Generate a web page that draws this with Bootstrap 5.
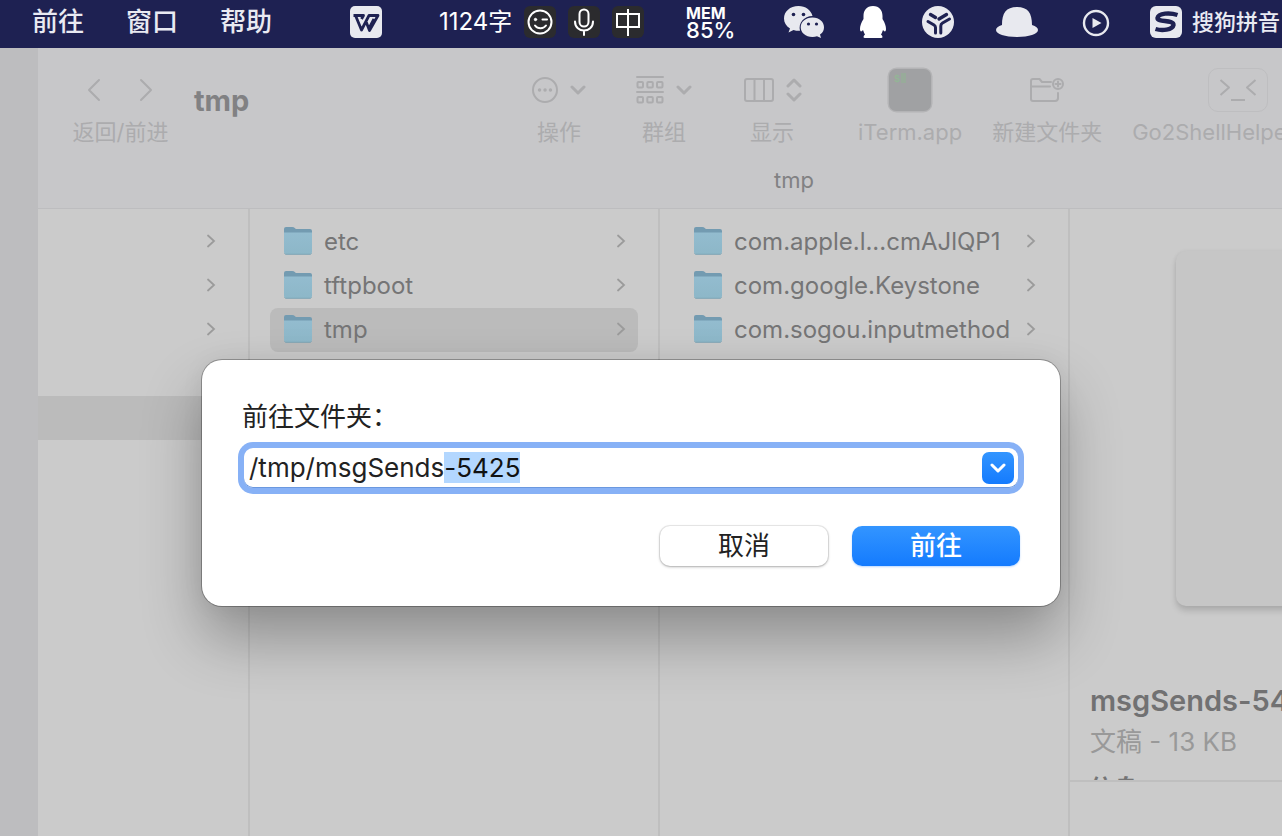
<!DOCTYPE html>
<html lang="zh-CN">
<head>
<meta charset="utf-8">
<meta name="viewport" content="width=device-width, initial-scale=1">
<title>tmp</title>
<link href="https://cdn.jsdelivr.net/npm/bootstrap@5.3.0/dist/css/bootstrap.min.css" rel="stylesheet">
<style>
  body { font-family: Inter, "Noto Sans CJK SC", sans-serif; background: #bdbdbf; color: #757576; }
  svg { flex: none; display: block; }
  .ico { fill: none; stroke: currentColor; stroke-width: 2; stroke-linecap: round; stroke-linejoin: round; }

  /* menu bar */
  .menubar { height: 48px; background: #1e2152; color: #e9eaf2; padding-left: 32px; padding-bottom: 4px; white-space: nowrap; }
  .menus { gap: 42px; font-size: 26px; font-weight: 500; line-height: 40px; }
  .menus a { color: inherit; text-decoration: none; }
  .wps { margin-left: 78px; margin-right: 57px; }
  .ime { gap: 12px; }
  .words { font-size: 24px; font-weight: 400; width: 73px; color: #fff; }
  .key { width: 32px; height: 32px; border-radius: 6px; background: #2b2b2e; color: #fff; }
  .status { gap: 36px; margin-left: 36px; }
  .mem { width: 68px; padding-left: 6px; color: #fff; font-size: 22px; line-height: 18px; font-weight: 500; }
  .mem strong { display: block; font-size: 16px; line-height: 16px; font-weight: 700; }
  .engine { gap: 8px; font-size: 22px; font-weight: 500; }

  /* file window */
  .desk { min-height: 0; overflow: hidden; padding-left: 38px; }
  .finder { width: calc(100% + 268px); background: #cbcbcb; }
  .toolbar { height: 161px; background: #c7c7c9; border-bottom: 1px solid #bdbdbf; color: #acacae; }
  .tools { height: 116px; padding: 20px 0 0 32px; white-space: nowrap; }
  .tool { font-size: 22px; line-height: 32px; border: 0; background: none; color: inherit; padding: 0 10px; }
  .tool-face { height: 44px; gap: 12px; margin-bottom: 4px; }
  .history { width: 101px; font-size: 22px; line-height: 32px; }
  .heading { width: 351px; padding-left: 23px; font-size: 29px; line-height: 66px; font-weight: 700; color: #818183; margin: 0; }
  .tool-set { gap: 30px; }
  .crumb { font-size: 22px; line-height: 32px; color: #818183; }
  .helper { width: 60px; height: 44px; border: 1px solid #bebec0; border-radius: 10px; }

  .pane { border-right: 2px solid #bfbfbf; padding-top: 11px; }
  .pane-first { width: 212px; }
  .pane-list { width: 410px; padding-left: 20px; padding-right: 20px; }
  .entry { height: 44px; padding: 0 12px 0 13px; border-radius: 8px; font-size: 24px; color: inherit; text-decoration: none; gap: 11px; white-space: nowrap; }
  .entry .go { margin-left: auto; color: #9b9b9b; }
  .entry svg { margin-bottom: 2px; }
  .pane-first .entry { padding-right: 32px; border-radius: 0; }
  .entry.picked { background: #bbb; }

  .preview-top { height: 573px; overflow: hidden; border-bottom: 2px solid #bfbfbf; padding: 42px 0 0 20px; }
  .sheet-image { height: 355px; margin-left: 86px; background: #c6c6c6; border-radius: 10px; box-shadow: 0 5px 6px rgba(0,0,0,.14), 0 0 4px rgba(0,0,0,.06); flex: none; }
  .file-name { font-size: 29px; line-height: 40px; font-weight: 600; margin: 75px 0 0; color: #717172; }
  .file-kind { font-size: 26px; line-height: 42px; color: #999; }
  .file-info { font-size: 24px; line-height: 52px; font-weight: 600; }

  /* go-to sheet */
  .goto { position: absolute; left: 202px; top: 360px; width: 858px; padding: 37px 40px 40px; border-radius: 20px; background: #fff; color: #222;
          box-shadow: 0 0 0 1px rgba(0,0,0,.28), 0 32px 60px rgba(0,0,0,.3), 0 0 24px rgba(0,0,0,.05); }
  .goto label { font-size: 26px; line-height: 40px; }
  .combo { height: 40px; margin: 11px 2px 38px; border-radius: 9px; background: #fff; box-shadow: 0 0 0 6px #87b1f6, inset 0 -1px 0 #6b98df; padding-right: 4px; }
  .combo input { border: 0; outline: 0; background: none; font-size: 26px; line-height: 32px; padding: 0 0 2px 5px; height: 36px; color: #222; }
  .combo input::selection { background: #b3d7ff; color: #111; }
  .drop { width: 32px; height: 32px; border: 0; border-radius: 7px; padding: 0; color: #fff; }
  .blue { background: linear-gradient(#3395ff, #147bfe); }
  .act { width: 168px; height: 40px; border: 0; border-radius: 10px; font-size: 26px; line-height: 38px; padding: 0; }
  .act.blue { color: #fff; font-weight: 500; box-shadow: 0 1px 2px rgba(20,123,254,.3); }
  .act.plain { background: #fff; color: #222; box-shadow: 0 0 0 1px rgba(0,0,0,.07), 0 1px 3px rgba(0,0,0,.28); }
</style>
</head>
<body class="vh-100 d-flex flex-column overflow-hidden">

<svg width="0" height="0" class="position-absolute" aria-hidden="true">
  <defs>
    <linearGradient id="face" x1="0" y1="0" x2="0" y2="1"><stop offset="0" stop-color="#93bccf"/><stop offset="1" stop-color="#8db7c8"/></linearGradient>
    <symbol id="folder" viewBox="0 0 30 28">
      <path d="M1 2Q1 0 3 0H9Q11 0 12 1.200T15 2H27Q29 2 29 4V12H1Z" fill="#739bb1"/>
      <path d="M1 5.500H29V25Q29 27 27 27H3Q1 27 1 25Z" fill="url(#face)"/>
      <path d="M1.500 26.500Q2 27.300 3 27.300H27Q28 27.300 28.500 26.500" fill="none" stroke="#7ba3b4"/>
    </symbol>
    <symbol id="next" viewBox="0 0 10 14"><path d="M2 1.500 8 7 2 12.500" fill="none" stroke="currentColor" stroke-width="1.800" stroke-linecap="round"/></symbol>
    <symbol id="down" viewBox="0 0 16 12"><path d="M2 3 8 9 14 3" fill="none" stroke="currentColor" stroke-width="3" stroke-linecap="round" stroke-linejoin="round"/></symbol>
  </defs>
</svg>

<nav class="menubar d-flex align-items-center flex-shrink-0 overflow-hidden">
  <div class="menus d-flex">
    <a href="#">前往</a><a href="#">窗口</a><a href="#">帮助</a>
  </div>
  <svg class="wps" width="32" height="32" viewBox="0 0 32 32"><rect width="32" height="32" rx="5" fill="#e8e9ef"/><path d="M3.500 9.500H13.500L11.500 13M5.500 9.500 11.500 24 19 9.500H28L19.500 24.500 16 15.500M24 13 20 20.500" fill="none" stroke="#1e2152" stroke-width="2.800" stroke-linejoin="round"/></svg>
  <div class="ime d-flex align-items-center">
    <span class="words">1124字</span>
    <span class="key d-flex align-items-center justify-content-center"><svg width="26" height="26" viewBox="0 0 26 26" class="ico"><circle cx="13" cy="13" r="11.500"/><circle cx="8.500" cy="10.500" r="1.200" fill="currentColor" stroke-width="1"/><path d="M15.500 10.500H20M8 16.500C11 20.500 16.500 20 19 16.500"/></svg></span>
    <span class="key d-flex align-items-center justify-content-center"><svg width="22" height="28" viewBox="0 0 22 28" class="ico"><rect x="6.500" y="1.500" width="9" height="17" rx="4.500"/><path d="M2 13.500C2 25.500 20 25.500 20 13.500M11 22.500V27"/></svg></span>
    <span class="key d-flex align-items-center justify-content-center"><svg width="26" height="28" viewBox="0 0 26 28" class="ico"><path d="M2 6H24V19H2ZM13 1V28" stroke-linecap="butt" stroke-linejoin="miter"/></svg></span>
  </div>
  <div class="status d-flex align-items-center">
    <span class="mem"><strong>MEM</strong>85%</span>
    <svg width="40" height="32" viewBox="0 0 40 32"><path d="M14.500 0C6 0 0 5.500 0 12.500 0 16.500 2 20 6 22.500L4.500 26.500 9.500 24C12 24.800 14 25 16 24.800 14 17 20 10 28.500 10 27 4 21.500 0 14.500 0Z" fill="#e8e9ef"/><path d="M28.500 11.500C21.500 11.500 16.700 16 16.700 21.200S21.500 31 28.500 31Q31 31 33 30.200L37 32 36 28.500C39 26.500 40 24 40 21.200 40 16 35.500 11.500 28.500 11.500Z" fill="#e8e9ef"/><g fill="#1e2152"><circle cx="9.500" cy="8.500" r="1.800"/><circle cx="19.500" cy="8.500" r="1.800"/><circle cx="24.500" cy="18" r="1.600"/><circle cx="32.500" cy="18" r="1.600"/></g></svg>
    <svg width="26" height="32" viewBox="0 0 26 32"><path d="M13 0C6.500 0 3.500 4.500 3.500 10V13C1 17 0 20 0 23 0 26 1.500 26 3 24Q4 27 5 28.500 3.500 29.500 3.500 31 3.500 32 5 32H21Q22.500 32 22.500 31 22.500 29.500 21 28.500 22 27 23 24C24.500 26 26 26 26 23 26 20 25 17 22.500 13V10C22.500 4.500 19.500 0 13 0Z" fill="#fff"/></svg>
    <svg width="32" height="32" viewBox="0 0 32 32"><circle cx="16" cy="16" r="16" fill="#e8e9ef"/><g fill="none" stroke="#1e2152" stroke-width="3" stroke-linecap="round"><path d="M6 15.500 12 19Q13.500 20 13.500 21.500V27M18.800 27V20Q18.800 18 20.500 17L27.500 13"/><path d="M8.500 8.500 13.500 11.500M24.500 8.500 17 13" stroke-width="3.400"/></g></svg>
    <svg width="54" height="30" viewBox="0 0 54 30"><path d="M12 18C12 6 16 0 27 0S42 6 42 18C46 19 48 21 48 23 48 27 39 30 27 30S6 27 6 23C6 21 8 19 12 18Z" fill="#e8e9ef"/></svg>
    <svg width="32" height="32" viewBox="0 0 32 32"><circle cx="16" cy="17" r="12" fill="none" stroke="#e8e9ef" stroke-width="2.400"/><path d="M12.500 12V22L21.500 17Z" fill="#e8e9ef"/></svg>
    <span class="engine d-flex align-items-center">
      <svg width="36" height="32" viewBox="0 0 36 32"><rect x="2" width="32" height="32" rx="6" fill="#e8e9ef"/><path d="M29.500 9C22 6.500 10.500 7 9.500 12 9 16.500 26 13.500 25.500 19 24.500 24 14 25 7.500 23" fill="none" stroke="#1e2152" stroke-width="4.400"/></svg>
      <span>搜狗拼音</span>
    </span>
  </div>
</nav>

<main class="desk flex-grow-1">
  <div class="finder h-100 d-flex flex-column">
    <header class="toolbar flex-shrink-0">
      <div class="tools d-flex">
        <div class="history text-center">
          <div class="tool-face d-flex align-items-center justify-content-center">
            <svg width="68" height="24" viewBox="0 0 68 24" class="ico"><path d="M12 2 2 12 12 22M54 2 64 12 54 22"/></svg>
          </div>
          返回/前进
        </div>
        <h1 class="heading">tmp</h1>
        <div class="tool-set d-flex align-items-start">
          <button class="tool"><span class="tool-face d-flex align-items-center justify-content-center">
            <svg width="26" height="26" viewBox="0 0 26 26" class="ico"><circle cx="13" cy="13" r="12"/><path d="M7.500 13H7.600M13 13H13.100M18.400 13H18.500" stroke-width="3.400"/></svg>
            <svg width="16" height="12"><use href="#down"/></svg></span>操作</button>
          <button class="tool"><span class="tool-face d-flex align-items-center justify-content-center">
            <svg width="28" height="28" viewBox="0 0 28 28" class="ico"><path d="M1 1H27M1 16H27"/><rect x="1.500" y="6" width="5.500" height="5.500" rx="1"/><rect x="11.300" y="6" width="5.500" height="5.500" rx="1"/><rect x="21" y="6" width="5.500" height="5.500" rx="1"/><rect x="1.500" y="21" width="5.500" height="5.500" rx="1"/><rect x="11.300" y="21" width="5.500" height="5.500" rx="1"/><rect x="21" y="21" width="5.500" height="5.500" rx="1"/></svg>
            <svg width="16" height="12"><use href="#down"/></svg></span>群组</button>
          <button class="tool"><span class="tool-face d-flex align-items-center justify-content-center">
            <svg width="32" height="24" viewBox="0 0 32 24" class="ico"><rect x="3" y="1" width="28" height="22" rx="2"/><path d="M12.500 1V23M22 1V23"/></svg>
            <svg width="16" height="24" viewBox="0 0 16 24" class="ico"><path d="M2 8 8 2 14 8M2 16 8 22 14 16" stroke-width="3"/></svg></span>显示</button>
          <button class="tool ms-3 px-0"><span class="tool-face d-flex align-items-center justify-content-center">
            <svg width="46" height="46" viewBox="0 0 46 46"><rect x=".5" y=".5" width="45" height="45" rx="9" fill="#b4b4b6"/><rect x="2" y="2" width="42" height="42" rx="7" fill="#a0a1a3"/><text x="7" y="15" font-size="10" font-family="Liberation Mono, monospace" font-weight="700" fill="#93b596">$</text><rect x="14" y="6" width="5" height="10" fill="#98ab9a"/></svg></span>iTerm.app</button>
          <button class="tool px-0"><span class="tool-face d-flex align-items-center justify-content-center">
            <svg width="36" height="26" viewBox="0 0 36 26" class="ico"><path d="M22 5H13L10.500 2H4Q2 2 2 4V22Q2 24 4 24H26Q29 24 29 21V16M2 9.500H21"/><circle cx="29" cy="7" r="5"/><path d="M29 4.500V9.500M26.500 7H31.500"/></svg></span>新建文件夹</button>
          <button class="tool px-0"><span class="tool-face d-flex align-items-center justify-content-center">
            <span class="helper d-flex align-items-center justify-content-center ms-5"><svg width="38" height="26" viewBox="0 0 38 26" class="ico"><path d="M1.500 3 10 10.500 1.500 18M36.500 3 28 10.500 36.500 18M12 23H26" stroke-linecap="butt"/></svg></span></span>Go2ShellHelper</button>
        </div>
      </div>
      <div class="crumb text-center">tmp</div>
    </header>

    <div class="d-flex flex-grow-1">
      <section class="pane pane-first flex-shrink-0">
        <a href="#" class="entry d-flex align-items-center" aria-label="文件夹"><svg class="go" width="10" height="14"><use href="#next"/></svg></a>
        <a href="#" class="entry d-flex align-items-center" aria-label="文件夹"><svg class="go" width="10" height="14"><use href="#next"/></svg></a>
        <a href="#" class="entry d-flex align-items-center" aria-label="文件夹"><svg class="go" width="10" height="14"><use href="#next"/></svg></a>
        <div class="entry"></div>
        <div class="entry picked"></div>
      </section>
      <section class="pane pane-list flex-shrink-0">
        <a href="#" class="entry d-flex align-items-center"><svg width="30" height="28"><use href="#folder"/></svg>etc<svg class="go" width="10" height="14"><use href="#next"/></svg></a>
        <a href="#" class="entry d-flex align-items-center"><svg width="30" height="28"><use href="#folder"/></svg>tftpboot<svg class="go" width="10" height="14"><use href="#next"/></svg></a>
        <a href="#" class="entry picked d-flex align-items-center"><svg width="30" height="28"><use href="#folder"/></svg>tmp<svg class="go" width="10" height="14"><use href="#next"/></svg></a>
      </section>
      <section class="pane pane-list flex-shrink-0">
        <a href="#" class="entry d-flex align-items-center"><svg width="30" height="28"><use href="#folder"/></svg>com.apple.l...cmAJlQP1<svg class="go" width="10" height="14"><use href="#next"/></svg></a>
        <a href="#" class="entry d-flex align-items-center"><svg width="30" height="28"><use href="#folder"/></svg>com.google.Keystone<svg class="go" width="10" height="14"><use href="#next"/></svg></a>
        <a href="#" class="entry d-flex align-items-center"><svg width="30" height="28"><use href="#folder"/></svg>com.sogou.inputmethod<svg class="go" width="10" height="14"><use href="#next"/></svg></a>
      </section>
      <section class="flex-grow-1">
        <div class="preview-top d-flex flex-column">
          <div class="sheet-image"></div>
          <h2 class="file-name">msgSends-5425</h2>
          <div class="file-kind">文稿 - 13 KB</div>
          <div class="file-info">信息</div>
        </div>
      </section>
    </div>
  </div>
</main>

<form class="goto" role="dialog" aria-label="前往文件夹">
  <label for="path" class="d-block">前往文件夹：</label>
  <div class="combo d-flex align-items-center">
    <input id="path" type="text" class="flex-grow-1" value="/tmp/msgSends-5425" autocomplete="off" spellcheck="false">
    <button type="button" class="drop blue d-flex align-items-center justify-content-center" aria-label="显示列表"><svg width="16" height="12"><use href="#down"/></svg></button>
  </div>
  <div class="d-flex justify-content-end gap-4">
    <button type="button" class="act plain">取消</button>
    <button type="submit" class="act blue">前往</button>
  </div>
</form>

<script src="https://cdn.jsdelivr.net/npm/bootstrap@5.3.0/dist/js/bootstrap.bundle.min.js"></script>
<script>
  // keep the auto-completed tail of the path selected
  const path = document.getElementById('path');
  path.focus();
  path.setSelectionRange('/tmp/msgSends'.length, path.value.length);
</script>
</body>
</html>
